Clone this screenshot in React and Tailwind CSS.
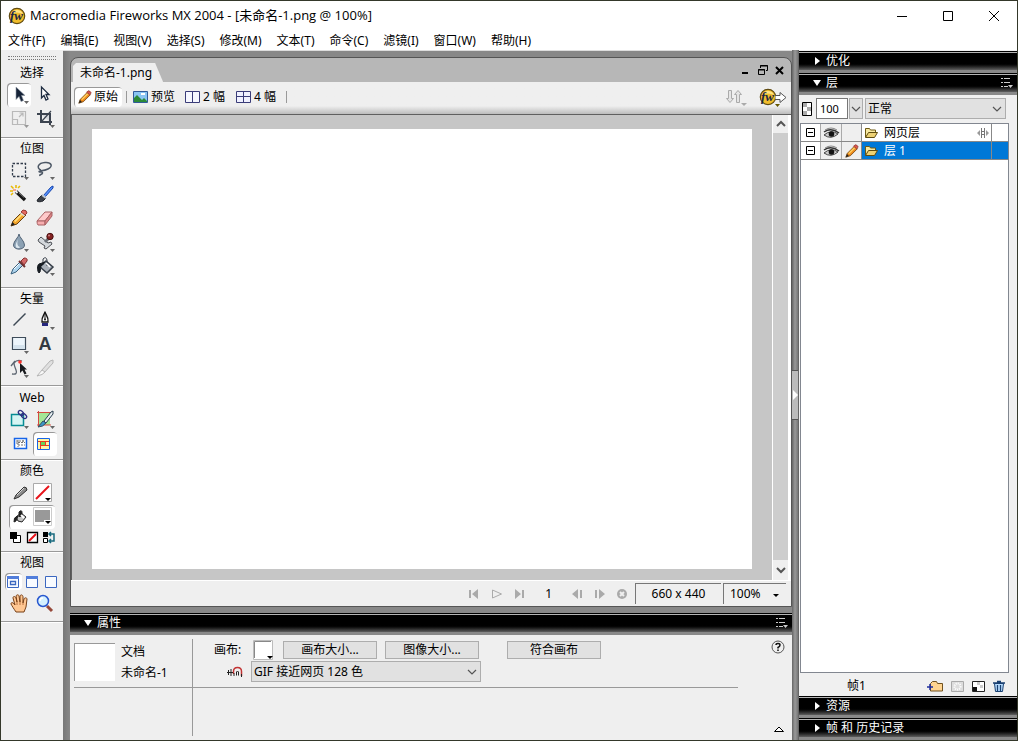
// App.jsx
import { useState } from "react";

const menus = ["文件(F)", "编辑(E)", "视图(V)", "选择(S)", "修改(M)", "文本(T)", "命令(C)", "滤镜(I)", "窗口(W)", "帮助(H)"];

function Icon({ children, className = "h-6 w-6", box = "0 0 24 24" }) {
    return (
        <svg viewBox={box} className={className} fill="none" aria-hidden="true">
            {children}
        </svg>
    );
}

const corner = <path d="M17 18h5l-2.500 3z" fill="#666" />;

function Logo({ className = "h-[18px] w-[18px]" }) {
    return (
        <Icon className={className} box="0 0 18 18">
            <circle cx="9" cy="9" r="7.700" fill="#f0bc2c" stroke="#5f4a12" strokeWidth="1.200" />
            <path d="M3 7a6.500 6.500 0 0 1 12 0q-6-3-12 0" fill="#ffe487" />
            <text x="8.500" y="13" textAnchor="middle" fontSize="13" fontWeight="bold" fontStyle="italic" fontFamily="Liberation Serif, serif" fill="#1c2542">fw</text>
        </Icon>
    );
}

function Pencil({ className }) {
    return (
        <Icon className={className} box="3 2 18 18">
            <path d="M4 19l2-5 9-9 4 3-9 9z" fill="#f08c1c" stroke="#69410f" />
            <path d="M7 14l8-8 1.500 1-8 8z" fill="#ffd060" />
            <path d="M14 5l2-2q3 0 4 3l-2 2z" fill="#d9564c" stroke="#933a35" />
            <path d="M4 19l1.500-4 2.500 2.500z" fill="#222" />
        </Icon>
    );
}

const selectTools = [
    { name: "指针", active: true, icon: <><path d="M9 4v12.500l3-3 2 5 2.500-1-2-5h3.500z" fill="#162338" stroke="#8f98a4" strokeWidth=".6" />{corner}</> },
    { name: "部分选定", icon: <path d="M8.500 4v11l2.500-2.500 2 4.500 2-1-2-4.500h3z" fill="#fff" stroke="#1d2b40" strokeWidth="1.300" /> },
    { name: "缩放", icon: <><path d="M5.500 4.500h13v13h-13zM5.500 12.500h5v5M12 10l4-4M12.500 6h3.500v3.500" stroke="#b9b9b9" strokeWidth="1.200" /><path d="M17 18h5l-2.500 3z" fill="#999" /></> },
    { name: "裁剪", icon: <><path d="M9 8h7v6z" fill="#d7dade" /><path d="M4 7h13v11M8 3v12h11" stroke="#3c4450" strokeWidth="2" /><path d="M9 14l9-10" stroke="#3c4450" strokeWidth="1.200" />{corner}</> },
];

const bitmapTools = [
    { name: "选取框", icon: <><path d="M5.500 4.500h13v13h-13z" stroke="#333d4c" strokeWidth="1.300" strokeDasharray="2.500 1.500" />{corner}</> },
    { name: "套索", icon: <><path d="M8 11C3 9 5 4 12 3.500s8 4 3 6.500-9 1-9 2.500 4-.5 3.500 1.500S6 15 7 17" stroke="#4c5765" strokeWidth="1.500" />{corner}</> },
    { name: "魔术棒", icon: <><path d="M9 8.500l9 8.500" stroke="#161616" strokeWidth="3.500" /><path d="M8 7.500l2.500 2.500" stroke="#eee" strokeWidth="2" /><path d="M9 2v3M4 3l2.500 2.500M3 8h3M4 12l2-2M11 5l2-2" stroke="#e9b900" strokeWidth="1.500" /><path d="M6 7h3" stroke="#ff5a2a" /><path d="M12 10l5 4.500" stroke="#888" strokeWidth=".8" /></> },
    { name: "刷子", icon: <><path d="M10 13l8-9 2-1v2l-8 9z" fill="#5793ff" stroke="#1644ad" /><path d="M5 16l4-4 4 3-3 3c-2 1-5 1-6 0z" fill="#3b4048" stroke="#20242a" /><path d="M9 12l4 3" stroke="#bdc5cf" strokeWidth="2" /></> },
    { name: "铅笔", icon: <><path d="M4 19l2-5 9-9 4 3-9 9z" fill="#f5a52b" stroke="#69410f" /><path d="M7 14l8-8 1.500 1-8 8z" fill="#ffdd77" /><path d="M14 5l2-2q4 0 4 3l-2 2z" fill="#e66a61" stroke="#933a35" /><path d="M13.500 6l4 3" stroke="#dedede" strokeWidth="1.500" /><path d="M4 19l1.500-4 2.500 2.500z" fill="#222" /></> },
    { name: "橡皮擦", icon: <><path d="M4 14l8-9h7l-7 9z" fill="#ffc9ca" stroke="#a86264" /><path d="M4 14h8v4H5q-1-1-1-4z" fill="#f7adaf" stroke="#a86264" /><path d="M12 14l7-9v4l-7 9z" fill="#dd8486" stroke="#a86264" /></> },
    { name: "模糊", icon: <><path d="M12 3c0 3-5.500 7-5.500 11 0 5.500 11 5.500 11 0 0-4-5.500-8-5.500-11z" fill="#8ca1b3" stroke="#536578" /><path d="M11 8c-1 3-3 5-2 8 1 2 4 1 4 0-3-1-3-4-2-8z" fill="#dbe7ef" />{corner}</> },
    { name: "橡皮图章", icon: <><path d="M5 9l3-3 7 6 3-1 1 2-6 5-2-1 1-2-6-4z" fill="#d4d8dc" stroke="#4c4f54" /><path d="M12 11l4-4" stroke="#6d7279" strokeWidth="3" /><circle cx="17" cy="5.500" r="3.200" fill="#842222" stroke="#481010" /><circle cx="16" cy="4.500" r="1" fill="#ce8585" />{corner}</> },
    { name: "滴管", icon: <><path d="M4 19l2-5 7-7 3 3-7 7z" fill="#abd2ec" stroke="#3a617e" /><path d="M12 6l6 6" stroke="#6b3030" strokeWidth="2" /><path d="M14 6l3-3q4 0 3 3l-3 4z" fill="#d46a6a" stroke="#873030" /><path d="M7 14l5-5" stroke="#fff" /></> },
    { name: "油漆桶", icon: <><path d="M7 12l6-6 7 6-6 6z" fill="#aab1b9" stroke="#353d47" strokeWidth="1.500" /><path d="M10 10V4q3-3 4 1v6" stroke="#353d47" /><path d="M7 12l5-5-6 2c-2 1-2 7 0 9 2-1 1-4 2-6z" fill="#171c22" stroke="#171c22" /><path d="M13 8l4 4" stroke="#fff" strokeWidth="1.500" />{corner}</> },
];

const vectorTools = [
    { name: "直线", icon: <path d="M6.500 16.500l12-12" stroke="#3d4854" strokeWidth="1.500" /> },
    { name: "钢笔", icon: <><path d="M12 2.500c0 3-4 5-3 10.500h6c1-5.500-3-7.500-3-10.500z" fill="#fff" stroke="#111" strokeWidth="1.400" /><path d="M12 4v6" stroke="#111" /><circle cx="12" cy="10.500" r="1" fill="#111" /><path d="M9 14h6v3H9z" fill="#26277e" />{corner}</> },
    { name: "矩形", icon: <><path d="M5.500 4.500h13v12h-13z" fill="#edf5fb" stroke="#3e4c5a" strokeWidth="1.200" /><path d="M6 12h12v4H6z" fill="#d5e3ed" />{corner}</> },
    { name: "文本", icon: <text x="12" y="17" textAnchor="middle" fontSize="18" fontWeight="bold" fontFamily="Liberation Sans, sans-serif" fill="#343a42">A</text> },
    { name: "自由变形", icon: <><path d="M5 17q6 1 4-4t-2-7q3-4 8-2M4 9l4-5" stroke="#5c6570" strokeWidth="1.300" /><path d="M13 6v10l2.500-2.500 2 4 2-1-2-4h2.500z" fill="#17191d" /><circle cx="13" cy="5" r="1.800" fill="#ff332d" />{corner}</> },
    { name: "刀子", icon: <><path d="M8 14L17 4l3-1v3l-9 10z" fill="#e0e0e0" stroke="#b5b5b5" /><path d="M4 19l5-6 3 2q-2 3-8 4z" fill="#f8f8f8" stroke="#b5b5b5" /></> },
];

const webTools = [
    { name: "矩形热点", icon: <><path d="M4.500 6.500h12v11h-12z" fill="#d6f4f3" stroke="#078c94" strokeWidth="1.500" /><ellipse cx="14" cy="5" rx="3" ry="2" transform="rotate(40 14 5)" stroke="#303083" strokeWidth="1.300" /><ellipse cx="17" cy="8" rx="3" ry="2" transform="rotate(40 17 8)" stroke="#303083" strokeWidth="1.300" />{corner}</> },
    { name: "切片", icon: <><path d="M6 4h11v13H6z" fill="#a4e796" /><path d="M4 4.500h14M5.500 3v15M4 17h14" stroke="#d44a40" /><path d="M11 13l7-9 2-1v3l-7 9z" fill="#e7edf0" stroke="#283d4f" /><path d="M5 19l5-6 3 2q-3 4-8 4z" fill="#3d98c9" stroke="#345061" />{corner}</> },
    { name: "隐藏切片和热点", icon: <><path d="M7.500 6.500h12v10h-12z" fill="#fff" stroke="#1664e8" strokeWidth="1.500" /><path d="M9 9h9M11 8v7M11 13h7M16 8v2M9 11h2M11 10.500h7" stroke="#777" strokeDasharray="2 1" /></> },
    { name: "显示切片和热点", active: true, icon: <><path d="M4.500 6.500h12v11h-12z" fill="#fff4a4" stroke="#1664e8" /><path d="M8 10h4v3H8z" fill="#66d357" /><path d="M5 9.500h11M7.500 9v8M8 13.500h8M12.500 9v4" stroke="#e93a20" /></> },
];

function ToolSection({ title, className = "pt-px", children }) {
    return (
        <section className={`border-b border-[#9a9a9a] shadow-[0_1px_0_#fff] ${className}`}>
            <h2 className="h-5 text-center leading-5">{title}</h2>
            {children}
        </section>
    );
}

function ToolGrid({ tools }) {
    return (
        <div className="flex flex-wrap gap-x-[2px] pl-[6px]">
            {tools.map((tool) => (
                <button
                    key={tool.name}
                    type="button"
                    aria-label={tool.name}
                    className={`h-6 w-6 ${tool.active ? "rounded-sm bg-white shadow-[inset_1px_1px_0_#999]" : ""}`}
                >
                    <Icon>{tool.icon}</Icon>
                </button>
            ))}
        </div>
    );
}

function Toolbox() {
    return (
        <aside className="flex w-[62px] shrink-0 flex-col bg-[#efefef]">
            <div className="mx-[7px] mt-[6px] h-1 shrink-0 border-y border-dotted border-[#777]" />
            <ToolSection title="选择" className="pt-[3px] pb-[6px]"><ToolGrid tools={selectTools} /></ToolSection>
            <ToolSection title="位图" className="pt-px pb-2"><ToolGrid tools={bitmapTools} /></ToolSection>
            <ToolSection title="矢量" className="pt-px pb-1"><ToolGrid tools={vectorTools} /></ToolSection>
            <ToolSection title="Web" className="pt-[2px] pb-[3px]"><ToolGrid tools={webTools} /></ToolSection>
            <ToolSection title="颜色" className="pt-px pb-[5px]">
                <div className="flex h-6 items-center gap-1 pl-3">
                    <Icon className="h-4 w-4" box="0 0 16 16">
                        <path d="M1 14l2-4 8-8q3 0 3 3l-8 7z" fill="#8b8b8b" stroke="#333" /><path d="M4 10l7-7" stroke="#d8d8d8" />
                    </Icon>
                    <button type="button" aria-label="笔触颜色">
                        <Icon className="h-5 w-5" box="0 0 20 20">
                            <path d="M.5 .5h18v18H.5z" fill="#fff" stroke="#aaa" /><path d="M3 16L16 3" stroke="#e8141b" strokeWidth="2" /><path d="M12 15h6l-3 3z" fill="#000" />
                        </Icon>
                    </button>
                </div>
                <div className="ml-2 flex h-6 w-[46px] items-center gap-1 rounded-sm bg-white pl-1 shadow-[inset_1px_1px_0_#999]">
                    <Icon className="h-4 w-4" box="0 0 16 16">
                        <path d="M3 8l5-4 5 4-4 5-4-1z" fill="#c6c6c6" stroke="#222" /><path d="M6 8V3q3-3 3 1v4M3 8q-2 0-2 5l2-1 2-5z" stroke="#222" fill="#222" /><path d="M8 6l3 3" stroke="#fff" strokeWidth="2" />
                    </Icon>
                    <button type="button" aria-label="填充颜色">
                        <Icon className="h-5 w-5" box="0 0 20 20">
                            <path d="M.5 .5h18v18H.5z" fill="#fff" stroke="#ccc" /><path d="M2 3h15v12H2z" fill="#999" /><path d="M11 13h7v5h-7z" fill="#fff" /><path d="M12 14h6l-3 3z" fill="#000" />
                        </Icon>
                    </button>
                </div>
                <div className="flex gap-1 py-[2px] pl-2">
                    <button type="button" aria-label="默认颜色"><Icon className="h-[13px] w-[13px]" box="0 0 13 13"><path d="M4.500 4.500h7v7h-7z" fill="#fff" stroke="#000" /><path d="M1 1h7v7H1z" fill="#000" /></Icon></button>
                    <button type="button" aria-label="没有颜色"><Icon className="h-[13px] w-[13px]" box="0 0 13 13"><path d="M1.500 1.500h10v10h-10z" fill="#fff" stroke="#000" strokeWidth="1.300" /><path d="M3 10l7-7" stroke="#e8141b" strokeWidth="2" /></Icon></button>
                    <button type="button" aria-label="交换颜色"><Icon className="h-[13px] w-[13px]" box="0 0 13 13"><path d="M0 1h5v5H0z" fill="#000" /><path d="M.5 7.500h4v4h-4z" fill="#fff" stroke="#000" /><path d="M6 3h5v7H6M8 1L6 3l2 2M8 8l-2 2 2 2" stroke="#17697e" strokeWidth="1.500" /></Icon></button>
                </div>
            </ToolSection>
            <ToolSection title="视图" className="pt-px pb-[5px]">
                <div className="mb-[2px] flex gap-[2px] pl-1">
                    {["标准屏幕模式", "带有菜单的全屏模式", "全屏模式"].map((name, i) => (
                        <button key={name} type="button" aria-label={name} className={`h-[17px] w-[17px] ${i === 0 ? "rounded-sm bg-white shadow-[inset_1px_1px_0_#999]" : ""}`}>
                            <Icon className="h-[17px] w-[17px]" box="0 0 17 17">
                                <path d="M2.500 3.500h11v11h-11z" fill="#f8fbff" stroke="#3b67c0" />
                                {i < 2 && <path d="M2 3h12v3H2z" fill="#527edb" />}
                                {i === 0 && <path d="M5.500 8.500h5v3h-5z" fill="#fff" stroke="#3b67c0" strokeWidth="1.300" />}
                            </Icon>
                        </button>
                    ))}
                </div>
                <div className="flex gap-[2px] pl-[6px]">
                    <button type="button" aria-label="手形">
                        <Icon>
                            <path d="M9 20C7 17 5 14 4 12c0-2 2-2 4 1L6 6c0-2 2-2 3 0l1 4-1-6c1-2 3-1 3 0l1 6V4c1-2 3-1 3 1v6l1-4c1-2 3-1 3 0l-1 8-2 5z" fill="#ffc792" stroke="#774018" /><path d="M10 13v-3M13 13v-3M16 13v-2" stroke="#bc723e" />
                        </Icon>
                    </button>
                    <button type="button" aria-label="缩放视图">
                        <Icon><path d="M14 14l5 5" stroke="#96483a" strokeWidth="3" /><circle cx="10" cy="9" r="5.500" fill="#d4f1ff" stroke="#2857cf" strokeWidth="1.500" /><path d="M7 9q0-3 3-3" stroke="#fff" strokeWidth="1.500" /></Icon>
                    </button>
                </div>
            </ToolSection>
        </aside>
    );
}

function PanelHeader({ title, open, options, onClick }) {
    return (
        <header className="flex h-[22px] shrink-0 items-center border-t border-b-3 border-t-black border-b-[#898989] bg-linear-to-b from-black from-60% to-[#606060] text-white shadow-[inset_0_1px_0_#b5b5b5]">
            <button type="button" onClick={onClick} className="flex flex-1 items-center gap-[5px] pl-[14px] text-left leading-4">
                <Icon className="h-2 w-2" box="0 0 8 8">
                    <path d={open ? "M0 1h8L4 7z" : "M2 0v8l5-4z"} fill="#fff" />
                </Icon>
                <h2>{title}</h2>
            </button>
            {options && (
                <button type="button" aria-label={`${title}选项`} className="mr-1">
                    <Icon className="h-3 w-3" box="0 0 12 12"><path d="M0 1.500h2M3 1.500h6M0 5.500h2M3 5.500h6M0 9.500h2M3 9.500h4" stroke="#ccc" /><path d="M7 8h5l-2.500 3z" fill="#ccc" /></Icon>
                </button>
            )}
        </header>
    );
}

function Chevron({ className = "", d = "M1 3l4 4 4-4", width = "1.2" }) {
    return <Icon className={`h-[10px] w-[10px] ${className}`} box="0 0 10 10"><path d={d} stroke="#555" strokeWidth={width} /></Icon>;
}

function Select({ label, options, className = "" }) {
    return (
        <div className={`relative ${className}`}>
            <select aria-label={label} className="h-[21px] w-full appearance-none border border-[#adadad] bg-[#e1e1e1] pl-[2px] leading-4 outline-none">
                {options.map((option) => <option key={option}>{option}</option>)}
            </select>
            <Chevron className="pointer-events-none absolute top-[6px] right-1" />
        </div>
    );
}

const previewIcons = {
    preview: <><path d="M.5 1.500h14v11H.5z" fill="#8ac5f3" stroke="#315b9a" /><path d="M1 12V8l3-3 5 5 2-2 3 3v1z" fill="#2b8a38" /><path d="M8 4h4" stroke="#fff" strokeWidth="2" /></>,
    two: <path d="M.5 1.500h14v11H.5zM7.500 1v11" fill="#f6f7ff" stroke="#3a3c79" />,
    four: <path d="M.5 1.500h14v11H.5zM7.500 1v12M0 6.500h15" fill="#f0f1ff" stroke="#3a3c79" />,
};

function DocumentWindow() {
    return (
        <main className="flex min-h-0 flex-1 flex-col overflow-hidden rounded-t-lg border border-[#555] bg-[#b7b7b7]">
            <div className="flex h-6 shrink-0 items-end justify-between pl-[2px]">
                <div className="h-[19px] bg-[#efefef] pr-[11px] pl-[7px] leading-[19px] [clip-path:polygon(0_3px,3px_0,calc(100%-8px)_0,100%_100%,0_100%)]">未命名-1.png</div>
                <div className="flex gap-[5px] self-center pr-[5px]">
                    <button type="button" aria-label="最小化文档"><Icon className="h-3 w-3" box="0 0 12 12"><path d="M2 9h6" stroke="#000" strokeWidth="2" /></Icon></button>
                    <button type="button" aria-label="还原文档"><Icon className="h-3 w-3" box="0 0 12 12"><path d="M3.500 4V1.500h7v5H9M1.500 5.500h6v5h-6zM3 2h8M1 6h7" stroke="#000" /></Icon></button>
                    <button type="button" aria-label="关闭文档"><Icon className="h-3 w-3" box="0 0 12 12"><path d="M2 3l7 7M9 3l-7 7" stroke="#000" strokeWidth="2" /></Icon></button>
                </div>
            </div>
            <div className="flex h-[33px] shrink-0 items-center border-b border-[#606060] bg-linear-to-b from-[#efefef] from-75% to-[#bcbcbc] pr-[4px] pb-[2px] pl-[3px]">
                <button type="button" className="flex h-5 items-center gap-[2px] rounded-sm bg-white pr-1 pl-[4px] shadow-[inset_1px_1px_0_#999]"><Pencil className="h-[14px] w-[14px]" />原始</button>
                <span className="mx-1 h-3 w-px bg-[#999]" />
                <button type="button" className="mx-[2px] flex items-center gap-[3px]"><Icon className="h-[14px] w-[15px]" box="0 0 15 14">{previewIcons.preview}</Icon>预览</button>
                <button type="button" className="ml-2 flex items-center gap-[3px]"><Icon className="h-[14px] w-[15px]" box="0 0 15 14">{previewIcons.two}</Icon>2 幅</button>
                <button type="button" className="ml-[11px] flex items-center gap-[3px]"><Icon className="h-[14px] w-[15px]" box="0 0 15 14">{previewIcons.four}</Icon>4 幅</button>
                <span className="mx-[10px] h-3 w-px bg-[#999]" />
                <button type="button" aria-label="文件管理" className="ml-auto">
                    <Icon className="h-5 w-[22px]" box="0 0 22 20"><path d="M3.500 3.500h3v8h2l-3.500 4-3.500-4h2zM11.500 15.500v-8h-2l3.500-4 3.500 4h-2v8z" fill="#e5e5e5" stroke="#aaa" /><path d="M16 16h6l-3 3z" fill="#aaa" /></Icon>
                </button>
                <button type="button" aria-label="快速导出" className="ml-3 flex items-center">
                    <Logo />
                    <Icon className="-ml-[2px] h-5 w-3" box="0 0 12 20"><path d="M0 8.500h5v-3l6 5-6 5v-3H0z" fill="#fff" stroke="#555" /><path d="M0 17h5l-2.500 3z" fill="#665600" /></Icon>
                </button>
            </div>
            <div className="flex min-h-0 flex-1 border-l border-[#606060] bg-[#c6c6c6]">
                <div className="flex flex-1 px-5 pt-[14px] pb-[11px]"><div className="flex-1 bg-white" /></div>
                <div className="flex w-[19px] flex-col items-center border-r-3 border-l border-white bg-[#efefef]">
                    <button type="button" aria-label="向上滚动" className="flex h-[18px] items-center"><Chevron d="M1 7l4-4 4 4" width="2" /></button>
                    <div className="w-full flex-1 bg-[#cdcdcd]" />
                    <button type="button" aria-label="向下滚动" className="flex h-5 items-center"><Chevron width="2" /></button>
                </div>
            </div>
            <footer className="flex h-[26px] shrink-0 items-center justify-end border-t border-white bg-[#efefef] pr-[5px] text-[#aaa]">
                <button type="button" aria-label="第一帧"><Icon className="h-3 w-3" box="0 0 12 12"><path d="M1 2h2v8H1zM10 1v10L4 6z" fill="currentColor" /></Icon></button>
                <button type="button" aria-label="播放" className="ml-[11px]"><Icon className="h-3 w-3" box="0 0 12 12"><path d="M1.500 2v8l9-4z" stroke="currentColor" /></Icon></button>
                <button type="button" aria-label="最后一帧" className="ml-[11px]"><Icon className="h-3 w-3" box="0 0 12 12"><path d="M8 2h2v8H8zM1 1v10l6-5z" fill="currentColor" /></Icon></button>
                <span className="mx-[19px] text-black">1</span>
                <button type="button" aria-label="上一帧"><Icon className="h-3 w-3" box="0 0 12 12"><path d="M9 2h2v8H9zM7 1v10L1 6z" fill="currentColor" /></Icon></button>
                <button type="button" aria-label="下一帧" className="ml-[11px]"><Icon className="h-3 w-3" box="0 0 12 12"><path d="M1 2h2v8H1zM5 1v10l6-5z" fill="currentColor" /></Icon></button>
                <button type="button" aria-label="退出" className="mr-[7px] ml-[10px]"><Icon className="h-3 w-3" box="0 0 12 12"><circle cx="6" cy="6" r="5" fill="currentColor" /><path d="M4 4l4 4M8 4L4 8" stroke="#efefef" strokeWidth="2" /></Icon></button>
                <span className="mr-[2px] flex h-[21px] w-[86px] items-center justify-center border-t border-l border-[#777] text-black">660 x 440</span>
                <button type="button" className="flex h-[21px] w-[63px] items-center justify-between border-t border-l border-[#777] px-[6px] text-black">
                    100%
                    <Icon className="h-2 w-2" box="0 0 8 8"><path d="M1 4h6L4 7z" fill="#000" /></Icon>
                </button>
            </footer>
        </main>
    );
}

function PropertyPanel() {
    const [open, setOpen] = useState(true);
    const button = "h-[18px] w-[94px] border border-[#adadad] bg-[#e1e1e1] leading-4";

    return (
        <section className="mt-[6px] shrink-0 bg-[#efefef]">
            <PanelHeader title="属性" open={open} options onClick={() => setOpen(!open)} />
            {open && (
                <div className="flex py-1 pl-1">
                    <div className="grid flex-1 grid-cols-[119px_1fr] grid-rows-[49px_48px]">
                        <div className="flex gap-[6px] border-r border-b border-[#999] pt-1">
                            <div className="h-[38px] w-[41px] border-t border-l border-[#999] bg-white" />
                            <div className="-mt-[2px] leading-[21px]"><p>文档</p><p>未命名-1</p></div>
                        </div>
                        <div className="flex flex-col border-b border-[#999] pl-[21px]">
                            <div className="flex items-center">
                                <span className="w-9">画布:</span>
                                <button type="button" aria-label="画布颜色" className="mr-[9px] ml-[2px]">
                                    <Icon className="h-[22px] w-[22px]" box="0 0 22 22"><path d="M1.500 1.500h19v19h-19z" fill="#fff" stroke="#bbb" /><path d="M2.500 19V2.500H19" stroke="#888" /><path d="M15 17h6l-3 3z" fill="#000" /></Icon>
                                </button>
                                <button type="button" className={button}>画布大小...</button>
                                <button type="button" className={`${button} ml-2`}>图像大小...</button>
                                <button type="button" className={`${button} ml-7`}>符合画布</button>
                            </div>
                            <div className="flex items-center pl-[13px]">
                                <Icon className="mr-2 h-3 w-4" box="0 0 16 12"><path d="M6.500 8V5.500q0-4 4-4t4 4V10" stroke="#c23434" strokeWidth="1.500" /><path d="M9.500 9.500V6q1-2 2 0v3.500M0 6.500h6M1.500 4v5M4 3v7M7 7v3M14.500 8v3" stroke="#222" /></Icon>
                                <Select label="导出设置" options={["GIF 接近网页 128 色", "GIF 网页 216 色", "JPEG - 较高品质"]} className="w-[230px]" />
                            </div>
                        </div>
                        <div className="border-r border-[#999]" />
                    </div>
                    <div className="flex w-[54px] flex-col items-end justify-between pt-px pr-[7px]">
                        <button type="button" aria-label="帮助">
                            <Icon className="h-[14px] w-[14px]" box="0 0 14 14"><circle cx="7" cy="7" r="6" stroke="#555" /><path d="M5 5q0-1.500 2-1.500T9 5q0 1.500-2 2.500v1M7 9.500v1.500" stroke="#111" strokeWidth="1.500" /></Icon>
                        </button>
                        <button type="button" aria-label="折叠"><Icon className="h-3 w-3" box="0 0 12 12"><path d="M1.500 7.500h9L6 3z" stroke="#000" fill="#fff" /></Icon></button>
                    </div>
                </div>
            )}
        </section>
    );
}

function Eye() {
    return <Icon className="h-3 w-[17px]" box="0 0 17 12"><path d="M1 8q7-6 14-1-7 6-14 1z" fill="#ccc" stroke="#444" /><circle cx="8.500" cy="7" r="2.800" fill="#111" /><path d="M1 5q7-5 15 1" stroke="#333" strokeWidth="1.500" /><path d="M2 3q6-4 12 0" stroke="#888" /></Icon>;
}

function LayerRow({ name, selected, shared }) {
    return (
        <li className="flex h-[18px] border-b border-[#888]">
            <button type="button" aria-label={`折叠 ${name}`} className="flex w-5 items-center justify-center border-r border-[#aaa]">
                <Icon className="h-[9px] w-[9px]" box="0 0 9 9"><path d="M.5 .5h8v8h-8zM2 4.500h5" stroke="#000" /></Icon>
            </button>
            <button type="button" aria-label={`显示 ${name}`} className="flex w-[21px] items-center justify-center border-r border-[#aaa] bg-[#efefef]"><Eye /></button>
            <span className="flex w-[19px] items-center justify-center bg-[#efefef]">{selected && <Pencil className="h-[14px] w-[14px]" />}</span>
            <button type="button" className={`flex flex-1 items-center gap-[6px] border-l border-[#888] pl-[2px] ${selected ? "bg-[#0078d7] text-white" : ""}`}>
                <Icon className="h-[13px] w-[14px]" box="0 0 14 13"><path d="M1.500 11V2.500h4l1 1.500h5v2" fill="#f7e8a0" stroke="#6d5913" /><path d="M1.500 11.500l3-5h9l-3 5z" fill="#edd174" stroke="#5e4c10" /></Icon>
                <span>{name}</span>
                {shared && <Icon className="mr-[2px] ml-auto h-3 w-3" box="0 0 12 12"><path d="M4.500 1v10M7.500 1v10M4 4.500h4M4 7.500h4" stroke="#777" /><path d="M3 3v6L0 6zM9 3v6l3-3z" fill="#999" /></Icon>}
            </button>
            <span className={`w-[17px] border-l border-[#888] ${selected ? "bg-[#0078d7]" : ""}`} />
        </li>
    );
}

function RightPanels() {
    const [open, setOpen] = useState(true);

    return (
        <aside className="flex w-[219px] shrink-0 flex-col border-l border-[#666] bg-[#f0f0f0] pt-px">
            <PanelHeader title="优化" />
            <PanelHeader title="层" open={open} options onClick={() => setOpen(!open)} />
            <div className="flex min-h-0 flex-1 flex-col">
                {open && (
                    <>
                        <div className="flex items-center pt-[3px] pr-[11px] pb-1 pl-[3px]">
                            <Icon className="mr-1 h-[14px] w-[10px]" box="0 0 10 14"><path d="M.5 .5h9v13h-9z" fill="#fff" stroke="#000" /><path d="M1 1h4v4H1zM5 5h4v4H5zM1 9h4v4H1z" fill="#aaa" /></Icon>
                            <input aria-label="不透明度" defaultValue="100" className="h-[21px] w-8 border border-[#777] bg-white pl-[3px] text-[11px] leading-4 outline-none" />
                            <button type="button" aria-label="调整不透明度" className="mr-[2px] ml-px flex h-[21px] w-[14px] items-center justify-center border border-[#adadad] bg-[#e1e1e1]"><Chevron /></button>
                            <Select label="混合模式" options={["正常", "色彩增殖", "屏幕"]} className="flex-1" />
                        </div>
                        <ul className="mr-2 ml-px min-h-0 flex-1 border border-[#828790] bg-white">
                            <LayerRow name="网页层" shared />
                            <LayerRow name="层 1" selected />
                        </ul>
                        <div className="flex h-[23px] shrink-0 items-center gap-[7px] pt-[2px] pr-3">
                            <span className="mr-auto ml-12">帧1</span>
                            <button type="button" aria-label="新建层" className="mr-px"><Icon className="h-[14px] w-4" box="0 0 16 14"><path d="M3.500 12V4.500l2-2h4l1 2h5V12z" fill="#ffd490" stroke="#70511f" /><path d="M0 8h6M3 5v6" stroke="#202e9c" strokeWidth="1.500" /></Icon></button>
                            <button type="button" aria-label="添加蒙版"><Icon className="h-[14px] w-[14px]" box="0 0 14 14"><path d="M.5 2.500h12v10H.5z" fill="#ddd" stroke="#aaa" /><circle cx="6.500" cy="7.500" r="3" stroke="#fff" strokeDasharray="1 1" strokeWidth="2" /></Icon></button>
                            <button type="button" aria-label="新建位图"><Icon className="h-[14px] w-[14px]" box="0 0 14 14"><path d="M.5 2.500h12v10H.5z" fill="#fff" stroke="#222" /><path d="M5 3h3v3h3v3H8V6H5z" fill="#ccc" /><path d="M1 8h4v4H1z" fill="#111" /></Icon></button>
                            <button type="button" aria-label="删除"><Icon className="h-[14px] w-3" box="0 0 12 14"><path d="M1.500 4.500h9l-1 8h-7z" fill="#b8ddff" stroke="#183f70" /><path d="M0 4h12M4 2.500h4M4.500 6v6M7.500 6v6" stroke="#183f70" strokeWidth="1.300" /></Icon></button>
                        </div>
                    </>
                )}
            </div>
            <PanelHeader title="资源" />
            <PanelHeader title="帧 和 历史记录" />
        </aside>
    );
}

export default function App() {
    return (
        <div className="flex h-screen flex-col overflow-hidden border border-[#34382a] bg-white font-['Noto_Sans','Noto_Sans_CJK_SC',sans-serif] text-xs text-black">
            <header className="flex h-[29px] shrink-0 items-center pl-[7px]">
                <Logo />
                <h1 className="ml-1 font-['Open_Sans','Noto_Sans_CJK_SC',sans-serif] text-[13px]">Macromedia Fireworks MX 2004 - [未命名-1.png @ 100%]</h1>
                <div className="ml-auto flex">
                    <button type="button" aria-label="最小化" className="flex w-[46px] justify-center"><Icon className="h-3 w-3" box="0 0 12 12"><path d="M1 6.500h10" stroke="#000" /></Icon></button>
                    <button type="button" aria-label="最大化" className="flex w-[46px] justify-center"><Icon className="h-3 w-3" box="0 0 12 12"><path d="M1.500 1.500h9v9h-9z" stroke="#000" /></Icon></button>
                    <button type="button" aria-label="关闭" className="flex w-[46px] justify-center"><Icon className="h-3 w-3" box="0 0 12 12"><path d="M1 1l10 10M11 1L1 11" stroke="#000" /></Icon></button>
                </div>
            </header>
            <nav className="flex h-5 shrink-0 items-center gap-[15px] pt-px pl-[7px]">
                {menus.map((menu) => <button key={menu} type="button" className="leading-4 whitespace-nowrap">{menu}</button>)}
            </nav>
            <div className="flex min-h-0 flex-1">
                <Toolbox />
                <div className="flex min-w-0 flex-1 flex-col border-t border-[#ddd] bg-linear-to-r from-[#777] to-[#888] to-[7px] pt-[6px] pl-[7px]">
                    <DocumentWindow />
                    <PropertyPanel />
                </div>
                <div className="flex w-[6px] shrink-0 flex-col justify-center bg-linear-to-r from-[#666] via-[#999] to-[#777]">
                    <button type="button" aria-label="折叠面板" className="flex h-[50px] items-center border-y border-[#555] bg-[#bbb]">
                        <Icon className="h-[10px] w-[6px]" box="0 0 6 10"><path d="M1 0v10l5-5z" fill="#fff" /></Icon>
                    </button>
                </div>
                <RightPanels />
            </div>
        </div>
    );
}
